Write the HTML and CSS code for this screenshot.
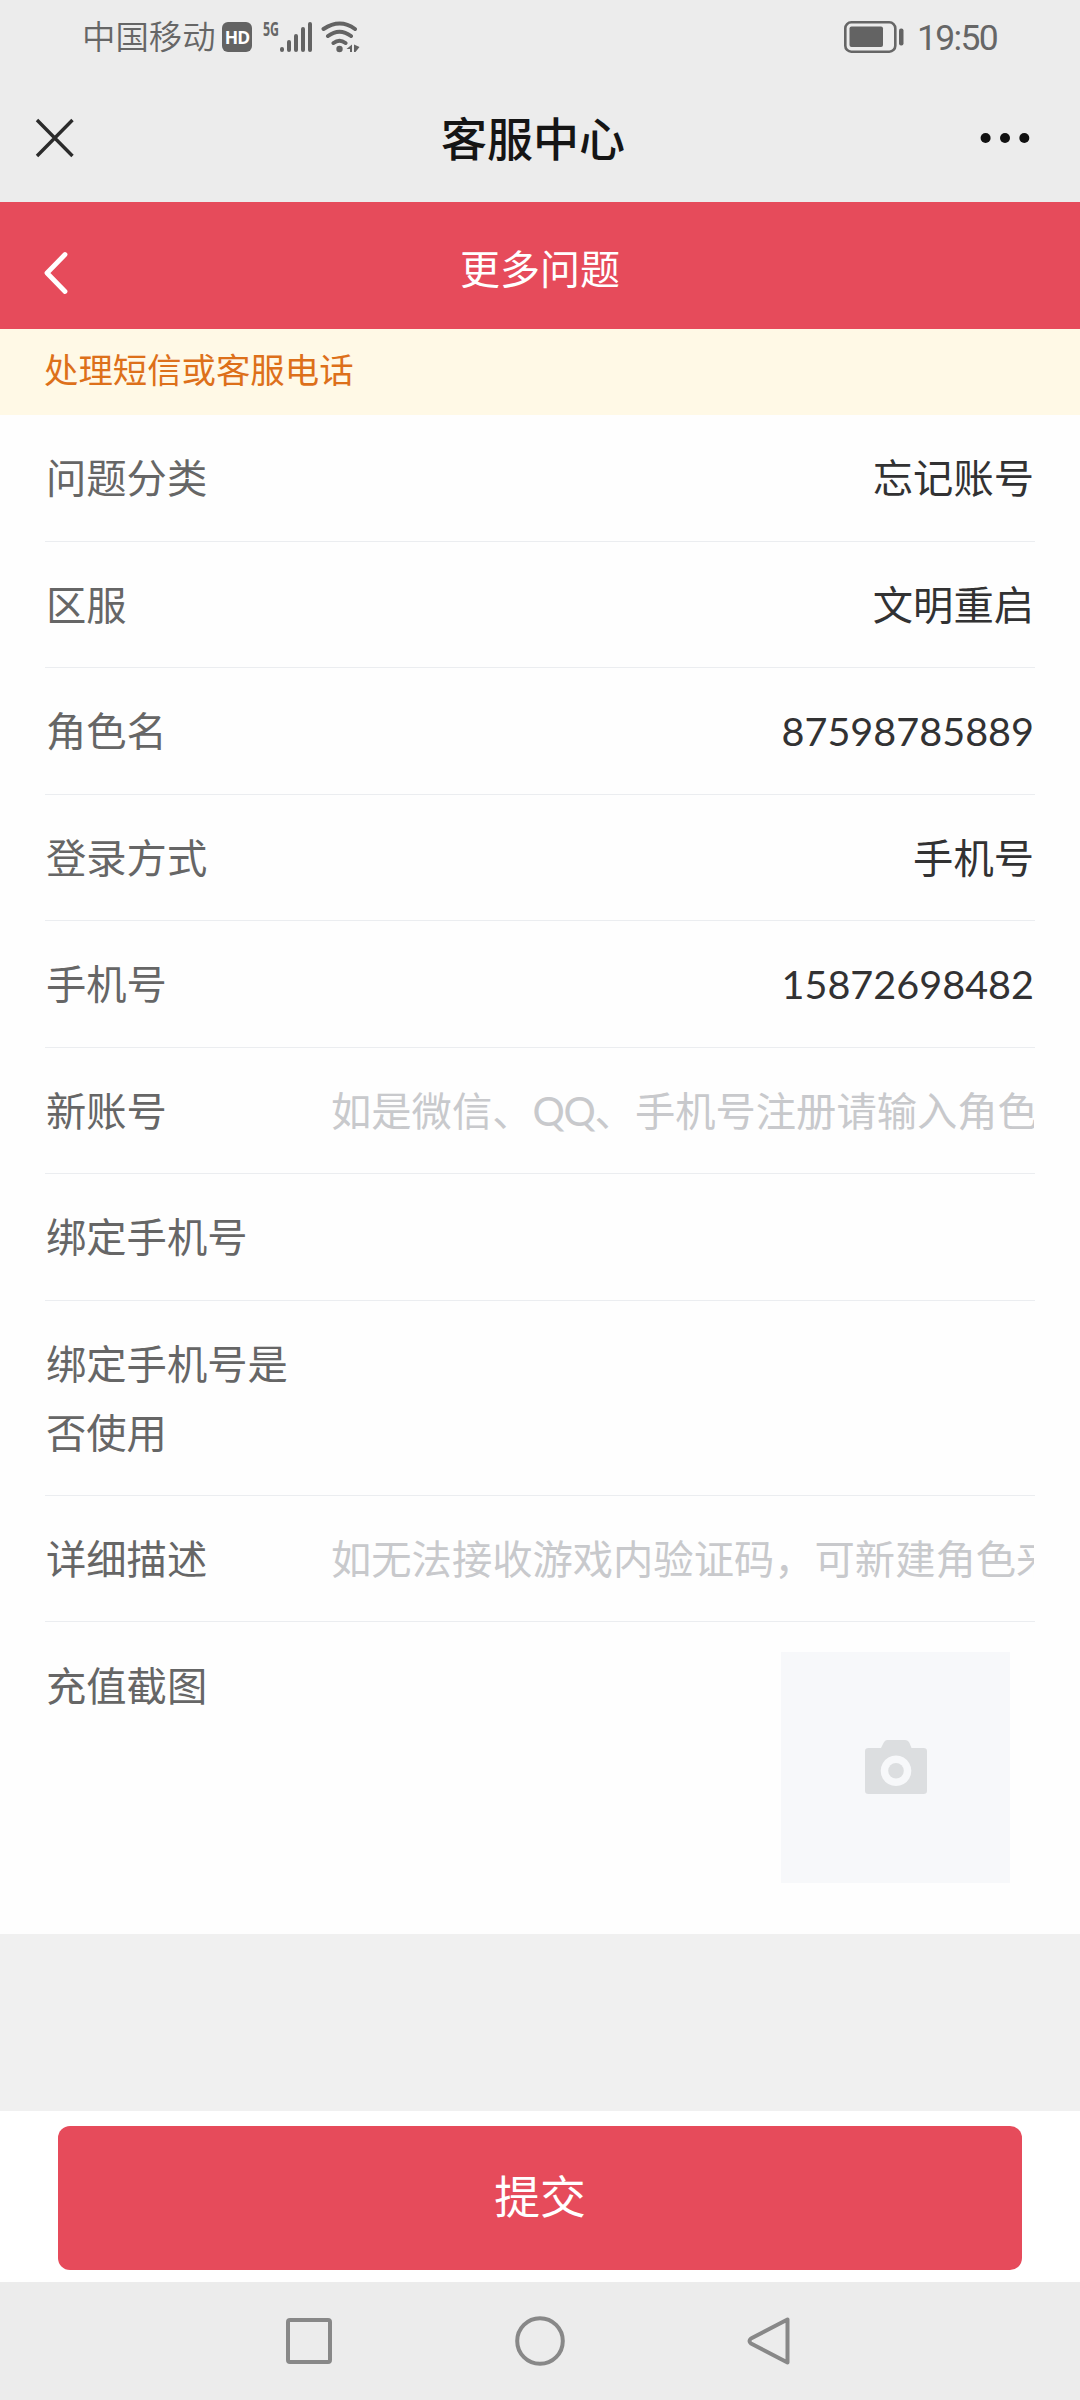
FILE: index.html
```html
<!DOCTYPE html>
<html lang="zh-CN">
<head>
<meta charset="utf-8">
<title>客服中心</title>
<link rel="stylesheet" href="styles.css">
</head>
<body>
<div class="status">
  <span class="carrier">中国移动</span>
  <span class="hd">HD</span>
  <span class="net">5G</span>
  <svg class="signal" width="34" height="32" viewBox="0 0 34 32" fill="none" stroke="#636363" stroke-width="4" stroke-linecap="round"><path d="M3 28v1M10 21v8M17 15v14M24 8v21M31 3v26"/></svg>
  <svg class="wifi" width="40" height="32" viewBox="0 0 40 32" fill="none" stroke="#636363" stroke-width="4" stroke-linecap="round"><path d="M3.500 8Q20 -3 35 8M8 15Q19.500 6.500 31 15M13.500 22Q19.500 17.500 25.500 22"/><circle cx="19.500" cy="28" r="3.200" fill="#636363" stroke="none"/><path d="M32 23.500v7.500h-2v-3h-3.500zM34 23.500l5.500 2.500l-4 5h-1.500z" fill="#636363" stroke="none"/></svg>
  <svg class="battery" width="60" height="32" viewBox="0 0 60 32"><rect x="1.300" y="1.300" width="50" height="29.400" rx="6" fill="none" stroke="#666" stroke-width="2.600"/><rect x="5.500" y="5.500" width="33.500" height="20.500" rx="2" fill="#636363"/><rect x="55" y="7.500" width="4.500" height="17" rx="2" fill="#636363"/></svg>
  <span class="time">19:50</span>
</div>
<header class="titlebar">
  <svg width="40" height="40" viewBox="0 0 40 40" fill="none" stroke="#2b2b2b" stroke-width="3.400"><path d="M2 2l35.500 36M37.500 2L2 38"/></svg>
  <h1>客服中心</h1>
  <svg width="50" height="12" viewBox="0 0 50 12" fill="#111"><circle cx="5.600" cy="6" r="5"/><circle cx="25" cy="6" r="5"/><circle cx="44.300" cy="6" r="5"/></svg>
</header>
<div class="pagebar">
  <svg width="28" height="44" viewBox="0 0 28 44" fill="none" stroke="#fff" stroke-width="4.800" stroke-linecap="round" stroke-linejoin="round"><path d="M23 3.500L5 22L23 40.500"/></svg>
  <h2>更多问题</h2>
</div>
<div class="notice">处理短信或客服电话</div>
<main class="form">
  <div class="row"><span class="label">问题分类</span><span class="value">忘记账号</span></div>
  <div class="row"><span class="label">区服</span><span class="value">文明重启</span></div>
  <div class="row"><span class="label">角色名</span><span class="value number">87598785889</span></div>
  <div class="row"><span class="label">登录方式</span><span class="value">手机号</span></div>
  <div class="row"><span class="label">手机号</span><span class="value number">15872698482</span></div>
  <div class="row"><span class="label">新账号</span><span class="hint">如是微信、<span class="latin">QQ</span>、手机号注册请输入角色</span></div>
  <div class="row"><span class="label">绑定手机号</span></div>
  <div class="row tall"><span class="label">绑定手机号是否使用</span></div>
  <div class="row"><span class="label">详细描述</span><span class="hint">如无法接收游戏内验证码，可新建角色来</span></div>
  <div class="row upload-row"><span class="label">充值截图</span>
    <div class="upload"><svg width="62" height="54" viewBox="0 0 62 54"><path fill="#dcdee0" fill-rule="evenodd" d="M22 0H40Q43 0 44.500 3L46.500 8H58.500Q62 8 62 11V51Q62 54 58.500 54H3.500Q0 54 0 51V11Q0 8 3.500 8H16L18.500 3Q20 0 22 0ZM31 15.500a15.300 15.300 0 1 0 .01 0Z"/><circle cx="31" cy="30.800" r="7.800" fill="#dcdee0"/></svg></div>
  </div>
</main>
<div class="submit-bar"><button class="submit">提交</button></div>
<nav class="sysnav">
  <svg width="46" height="46" viewBox="0 0 46 46" fill="none" stroke="#888" stroke-width="4"><rect x="2" y="2" width="42" height="42" rx="2"/></svg>
  <svg width="50" height="50" viewBox="0 0 50 50" fill="none" stroke="#888" stroke-width="4"><circle cx="25" cy="25" r="22.800"/></svg>
  <svg width="44" height="50" viewBox="0 0 44 50" fill="none" stroke="#888" stroke-width="4" stroke-linejoin="round"><path d="M40.500 3.500V46.500L4 27.500Q1 25 4 22.500Z"/></svg>
</nav>
</body>
</html>
```
FILE: styles.css
```css
* { box-sizing: border-box; }
body {
  margin: 0;
  width: 1080px;
  height: 2400px;
  display: flex;
  flex-direction: column;
  overflow: hidden;
  background: #f0f0f0;
  font-family: Lato, "Noto Sans CJK SC", sans-serif;
  font-size: 40.3px;
}
h1, h2 { margin: 0; flex: 1; text-align: center; }
svg { display: block; flex: none; }

.status {
  height: 73px;
  padding: 0 81px 0 82px;
  display: flex;
  align-items: center;
  background: #ececec;
  color: #666;
}
.carrier { font-size: 33.4px; font-weight: 350; line-height: 40px; width: 140px; margin-top: -1px; white-space: nowrap; }
.hd {
  width: 30px;
  height: 30px;
  border-radius: 6px;
  background: #636363;
  color: #fff;
  font: bold 17.500px/30px "Open Sans", sans-serif;
  letter-spacing: -1px;
  text-align: center;
}
.net {
  margin: 0 0 16px 11px;
  width: 16px;
  font: bold 19px/18px "Open Sans", sans-serif;
  transform: scaleX(.65);
  transform-origin: left;
}
.wifi { margin-left: 7px; }
.battery { margin-left: auto; margin-right: 13px; }
.time { font: 400 35.500px/40px Roboto, sans-serif; letter-spacing: -1.7px; width: 82px; margin-top: 3px; }

.titlebar {
  height: 129px;
  padding: 0 50px 0 35px;
  display: flex;
  align-items: center;
  background: #ececec;
  color: #151515;
}
.titlebar h1 { font-size: 46px; font-weight: 500; line-height: 60px; margin-left: 11px; margin-top: 3px; }

.pagebar {
  height: 127px;
  padding: 0 42px;
  display: flex;
  align-items: center;
  background: #e64b5b;
  color: #fff;
}
.pagebar svg { margin-top: 15px; }
.pagebar h2 { font-size: 40px; font-weight: 400; line-height: 60px; margin-right: 28px; margin-top: 6px; }

.notice {
  height: 86px;
  padding-left: 44px;
  line-height: 81px;
  font-size: 34.4px;
  background: #fff9e6;
  color: #dd701a;
}

.form { height: 1519px; padding: 0 45px; background: #fefefe; }
.row {
  height: 126.5px;
  padding-top: 28.200px;
  display: flex;
  line-height: 69px;
  border-bottom: 1px solid #ebedf0;
}
.tall { height: 195.4px; }
.label { flex: none; width: 246px; padding-left: 1px; margin-right: 40px; color: #666; }
.value { flex: 1; text-align: right; padding-right: 1px; color: #323233; }
.number { font-size: 39.6px; }
.hint { flex: 1; min-width: 0; margin-right: 1px; overflow: hidden; white-space: nowrap; color: #c8c9cc; }
.latin { letter-spacing: -1.2px; }
.upload-row { height: auto; border: 0; justify-content: space-between; }
.upload {
  width: 229px;
  height: 231px;
  margin: 1px 25px 0 0;
  display: grid;
  place-items: center;
  background: #f7f8fa;
}

.submit-bar { height: 171px; margin-top: 177px; padding: 15px 58px 12px; background: #fff; }
.submit {
  display: block;
  width: 100%;
  height: 144px;
  padding: 0 0 9px;
  border: 0;
  border-radius: 12px;
  background: #e64b5b;
  color: #fff;
  font: 400 45.800px/60px "Noto Sans CJK SC", sans-serif;
}

.sysnav {
  flex: 1;
  padding: 0 289px 0 286px;
  display: flex;
  align-items: center;
  justify-content: space-between;
  background: #ececec;
}
```
